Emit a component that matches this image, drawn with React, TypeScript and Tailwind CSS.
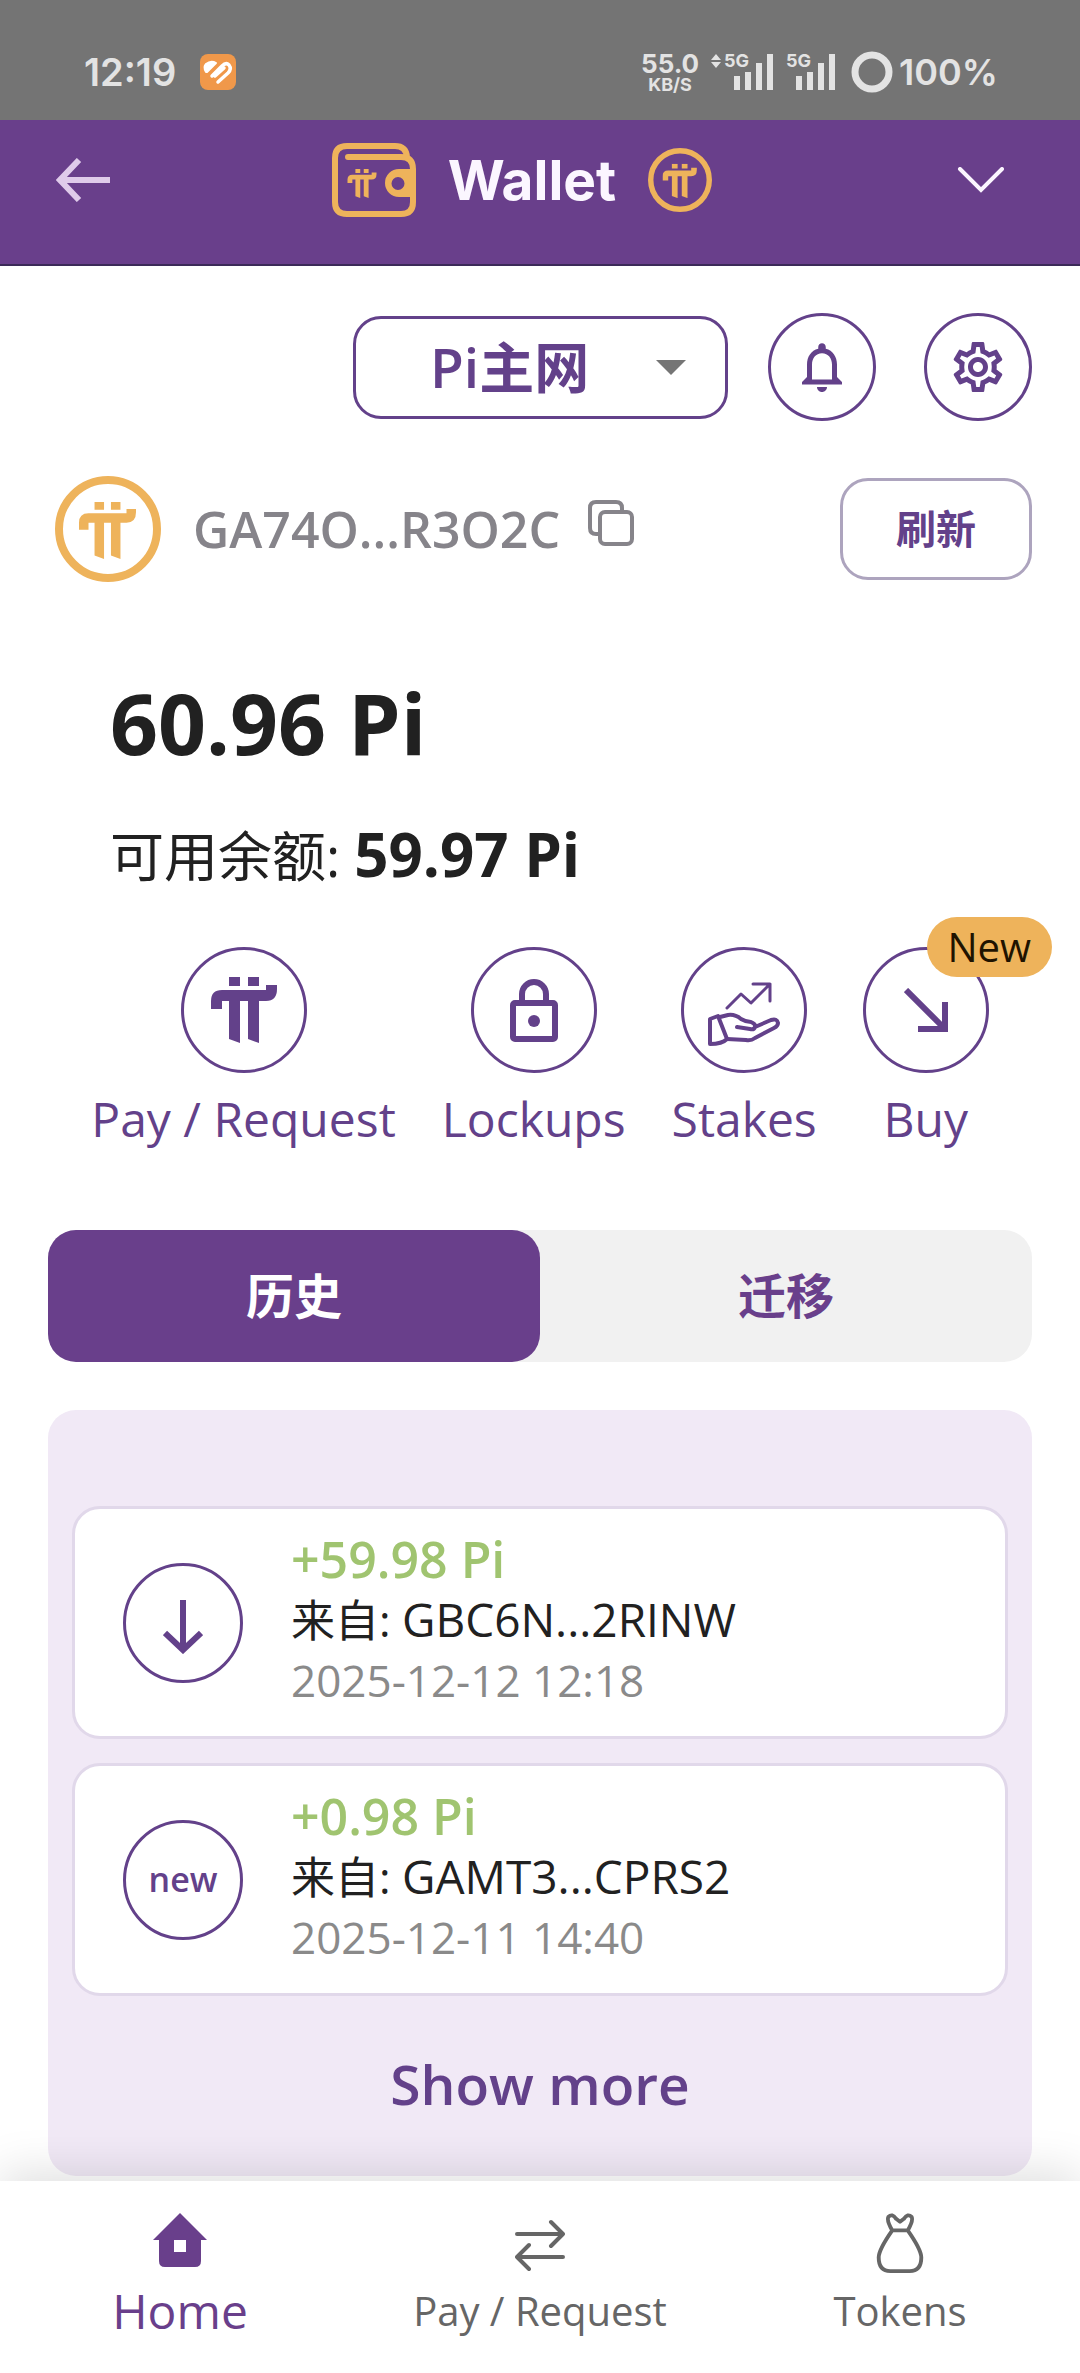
import { useState } from "react";
import { MdNotificationsNone, MdOutlineSettings } from "react-icons/md";

const networks = ["Pi主网", "Pi测试网"];

const transactions = [
    { amount: "+59.98 Pi", from: "GBC6N...2RINW", date: "2025-12-12 12:18", isNew: false },
    { amount: "+0.98 Pi", from: "GAMT3...CPRS2", date: "2025-12-11 14:40", isNew: true },
];

const PI_PATH =
    "M18 0h11v9H18zM37 0h11v9H37zM0 32V24Q0 13 11 13H55V8H66V12Q66 24 55 24H48V66L37 62V24H29V66L18 62V24H11V32Z";

const PiCoin = ({ className = "", stroke = 8 }) => (
    <svg viewBox="0 0 106 106" className={className} aria-hidden="true">
        <circle cx="53" cy="53" r={53 - stroke / 2} fill="none" stroke="currentColor" strokeWidth={stroke} />
        <svg x="24" y="26" width="57" height="57" viewBox="0 0 66 66" fill="currentColor">
            <path d={PI_PATH} />
        </svg>
    </svg>
);

const WalletLogo = () => (
    <svg viewBox="0 0 84 74" className="h-[74px] w-[84px] text-[#eeb35b]" fill="none" stroke="currentColor" aria-hidden="true">
        <path d="M75 14Q74 3 63 3H15Q3 3 3 15V59Q3 71 15 71H69Q81 71 81 59V26Q81 14 69 14H16" strokeWidth="6" strokeLinecap="round" />
        <path d="M81 26H67a14 14 0 0 0 0 28H81ZM66 34a6 6 0 1 1 0 13a6 6 0 1 1 0 -13Z" fill="currentColor" fillRule="evenodd" stroke="none" />
        <svg x="15" y="26" width="30" height="29" viewBox="0 0 66 66" fill="currentColor" stroke="none">
            <path d={PI_PATH} />
        </svg>
    </svg>
);

const Signal = ({ active = false }) => (
    <div className="relative h-9 w-[62px]">
        {active && (
            <svg viewBox="0 0 10 14" className="absolute left-0 top-0 h-3.5 w-2.5" fill="currentColor" aria-hidden="true">
                <path d="M5 0L10 6H0ZM5 14L0 8H10Z" />
            </svg>
        )}
        <span className="absolute left-[13px] -top-0.5 text-lg leading-none font-bold">5G</span>
        <svg viewBox="0 0 62 36" className="h-full w-full" fill="currentColor" aria-hidden="true">
            <path d="M23 22h6v14h-6zM34 18h6v18h-6zM45 9h6v27h-6zM56 0h6v36h-6z" />
        </svg>
    </div>
);

const StatusBar = () => (
    <div className="flex h-[120px] items-center justify-between bg-[#747474] pr-[82px] pl-[84px] pt-6 font-['Inter','Liberation_Sans',sans-serif] font-semibold text-[#e3e3e3]">
        <div className="flex items-center gap-6">
            <span className="text-[38px] leading-none">12:19</span>
            <svg viewBox="0 0 36 36" className="size-9" aria-hidden="true">
                <rect width="36" height="36" rx="8" fill="#f0984a" />
                <path d="M6 18Q3 13 6 10Q11 6 16 9L7 18Z" fill="#fff" stroke="#fff" strokeWidth="2" strokeLinejoin="round" />
                <path d="M12 22L22 12Q26 8 29 11Q32 15 28 19L18 28M15 22L24 14" fill="none" stroke="#fff" strokeWidth="3.5" strokeLinecap="round" strokeLinejoin="round" />
            </svg>
        </div>
        <div className="flex items-center">
            <div className="flex flex-col items-center font-bold">
                <span className="text-[26px] leading-[26px]">55.0</span>
                <span className="text-lg leading-4">KB/S</span>
            </div>
            <div className="ml-3 flex">
                <Signal active />
                <Signal />
            </div>
            <svg viewBox="0 0 42 42" className="ml-4 size-[42px]" aria-hidden="true">
                <circle cx="21" cy="21" r="17" fill="none" stroke="currentColor" strokeWidth="7" />
            </svg>
            <span className="ml-1.5 text-4xl leading-none">100%</span>
        </div>
    </div>
);

const Header = () => (
    <header className="flex h-[146px] items-center justify-between border-b-2 border-[#3b2a58] bg-[#693f8b] pr-[52px] pl-14 pb-6">
        <button aria-label="Back" className="text-[#dfcbea]">
            <svg viewBox="0 0 54 44" className="h-11 w-[54px]" fill="none" stroke="currentColor" strokeWidth="6" aria-hidden="true">
                <path d="M54 22H4M23 2L4 22L23 42" />
            </svg>
        </button>
        <div className="flex items-center gap-8">
            <WalletLogo />
            <h1 className="font-['Inter','Liberation_Sans',sans-serif] text-[55px] leading-none font-bold text-[#fbf6ff]">Wallet</h1>
            <PiCoin className="size-16 text-[#eeb35b]" stroke={9} />
        </div>
        <button aria-label="Expand" className="px-5 text-[#fbf6ff]">
            <svg viewBox="0 0 54 26" className="h-[26px] w-[54px]" fill="none" stroke="currentColor" strokeWidth="4" strokeLinecap="round" aria-hidden="true">
                <path d="M6 2L27 23L48 2" />
            </svg>
        </button>
    </header>
);

const NetworkBar = () => (
    <div className="flex items-center justify-end">
        <div className="relative mr-10">
            <select
                aria-label="Network"
                className="h-[103px] w-[375px] appearance-none rounded-[28px] border-3 border-[#63418a] bg-white pl-[74px] text-[55px] font-semibold text-[#63418a]"
            >
                {networks.map((n) => (
                    <option key={n}>{n}</option>
                ))}
            </select>
            <svg viewBox="0 0 30 15" className="pointer-events-none absolute right-[42px] top-11 h-[15px] w-[30px]" fill="#757575" aria-hidden="true">
                <path d="M0 0H30L15 15Z" />
            </svg>
        </div>
        <button aria-label="Notifications" className="mr-12 flex size-[108px] items-center justify-center rounded-full border-3 border-[#63418a] text-[#63418a]">
            <MdNotificationsNone className="size-[60px]" />
        </button>
        <button aria-label="Settings" className="flex size-[108px] items-center justify-center rounded-full border-3 border-[#63418a] text-[#63418a]">
            <MdOutlineSettings className="size-[60px]" />
        </button>
    </div>
);

const AccountRow = () => (
    <div className="mt-[55px] flex items-center pl-[7px]">
        <PiCoin className="size-[106px] text-[#eeb35b]" />
        <span className="ml-8 text-[50px] leading-none font-semibold text-[#86848a]">GA74O...R3O2C</span>
        <button aria-label="Copy address" className="mb-3 ml-7 text-[#86848a]">
            <svg viewBox="0 0 46 46" className="size-[46px]" fill="none" stroke="currentColor" strokeWidth="4" aria-hidden="true">
                <rect x="12" y="12" width="32" height="32" rx="5" />
                <path d="M12 34H8Q2 34 2 28V8Q2 2 8 2H28Q34 2 34 8V12" />
            </svg>
        </button>
        <button className="ml-auto h-[102px] w-48 rounded-[28px] border-3 border-[#ada4be] text-[40px] font-bold text-[#63418a]">
            刷新
        </button>
    </div>
);

const Balance = () => (
    <div className="mt-24 pl-[62px] text-[#212121]">
        <p className="text-[84px] leading-[90px] font-bold">60.96 Pi</p>
        <p className="mt-[46px] text-[54px] leading-[80px]">
            可用余额: <span className="text-[60px] font-bold">59.97 Pi</span>
        </p>
    </div>
);

const actions = [
    {
        label: "Pay / Request",
        icon: (
            <svg viewBox="0 0 66 66" className="size-[66px]" fill="currentColor" aria-hidden="true">
                <path d={PI_PATH} />
            </svg>
        ),
    },
    {
        label: "Lockups",
        icon: (
            <svg viewBox="0 0 48 63" className="h-[63px] w-12" fill="none" stroke="currentColor" strokeWidth="6" aria-hidden="true">
                <rect x="3" y="24" width="42" height="36" rx="2" />
                <path d="M12 24V15a12 12 0 0 1 24 0V24" />
                <circle cx="24" cy="42" r="6" fill="currentColor" stroke="none" />
            </svg>
        ),
    },
    {
        label: "Stakes",
        icon: (
            <svg viewBox="0 0 72 72" className="size-[72px]" fill="none" stroke="currentColor" strokeWidth="4" strokeLinecap="round" strokeLinejoin="round" aria-hidden="true">
                <path d="M19 34L33 20L43 29L62 10M45 10H62V27" strokeWidth="3" />
                <path d="M2 45L10 42L19 65Q14 70 2 70Z" />
                <path d="M12 43L20 41Q27 40 33 45Q38 48 43 48Q48 50 47 53Q46 56 42 55L29 53M47 53L63 46Q69 44 70 49Q70 52 66 54L47 64Q43 67 38 66L19 65" />
            </svg>
        ),
    },
    {
        label: "Buy",
        icon: (
            <svg viewBox="0 0 44 44" className="size-11" fill="none" stroke="currentColor" strokeWidth="6" aria-hidden="true">
                <path d="M2 2L40 40M41 14V41H14" />
            </svg>
        ),
        badge: "New",
    },
];

const Actions = () => (
    <div className="mt-[51px] flex justify-center gap-[46px] text-[#63418a]">
        {actions.map((a) => (
            <button key={a.label} className="flex flex-col items-center gap-3.5">
                <span className="relative flex size-[126px] items-center justify-center rounded-full border-3 border-[#63418a]">
                    {a.icon}
                    {a.badge && (
                        <span className="absolute -top-[33px] left-[61px] flex h-[60px] w-[125px] items-center justify-center rounded-full bg-[#eeb35b] text-[40px] text-[#1f1300]">
                            {a.badge}
                        </span>
                    )}
                </span>
                <span className="text-5xl leading-[64px]">{a.label}</span>
            </button>
        ))}
    </div>
);

const Tabs = () => {
    const [active, setActive] = useState("历史");

    return (
        <div role="tablist" className="mt-[79px] flex rounded-[28px] bg-[#f1f1f1]">
            {["历史", "迁移"].map((tab) => (
                <button
                    key={tab}
                    role="tab"
                    aria-selected={active === tab}
                    onClick={() => setActive(tab)}
                    className={`h-[132px] flex-1 rounded-[28px] text-5xl font-bold ${active === tab ? "bg-[#693f8b] text-white" : "text-[#693f8b]"}`}
                >
                    {tab}
                </button>
            ))}
        </div>
    );
};

const History = () => (
    <section className="mt-12 rounded-[28px] bg-[#f1e9f6] px-6 pt-24 pb-[50px]">
        <ul className="flex flex-col gap-6">
            {transactions.map((t) => (
                <li key={t.date} className="flex items-center gap-12 rounded-[28px] border-3 border-[#e1d8ea] bg-white px-12 py-5">
                    <span className="flex size-[120px] items-center justify-center rounded-full border-3 border-[#63418a] text-[34px] font-semibold text-[#63418a]">
                        {t.isNew ? (
                            "new"
                        ) : (
                            <svg viewBox="0 0 40 54" className="mt-2 h-[54px] w-10" fill="none" stroke="currentColor" strokeWidth="6" aria-hidden="true">
                                <path d="M20 0V50M2 33L20 50L38 33" />
                            </svg>
                        )}
                    </span>
                    <div className="pb-1.5">
                        <p className="text-[50px] leading-[60px] font-semibold text-[#a0c470]">{t.amount}</p>
                        <p className="text-[44px] leading-[60px] text-[#212121]">
                            来自: <span className="text-[46px]">{t.from}</span>
                        </p>
                        <p className="text-[44px] leading-[60px] text-[#8a8a8a]">{t.date}</p>
                    </div>
                </li>
            ))}
        </ul>
        <button className="mx-auto mt-[46px] block text-[55px] leading-[84px] font-semibold text-[#63418a]">Show more</button>
    </section>
);

const BottomNav = () => (
    <nav className="sticky bottom-0 mt-1 grid grid-cols-3 bg-white py-8 text-[#666] shadow-[0_-8px_44px_rgba(0,0,0,0.13)]">
        <a href="#home" className="flex flex-col items-center text-[#693f8b]">
            <svg viewBox="0 0 54 60" className="h-[60px] w-[54px]" fill="currentColor" aria-hidden="true">
                <path d="M27 0L54 27H48V48Q48 54 42 54H12Q6 54 6 48V27H0ZM21 27V39H33V27Z" fillRule="evenodd" />
            </svg>
            <span className="mt-2 text-5xl leading-[60px]">Home</span>
        </a>
        <a href="#pay" className="flex flex-col items-center">
            <svg viewBox="0 0 50 60" className="h-[60px] w-[50px]" fill="none" stroke="currentColor" strokeWidth="4" strokeLinecap="round" strokeLinejoin="round" aria-hidden="true">
                <path d="M2 21H48M36 9L48 21L36 33M48 44H2M14 32L2 44L14 56" />
            </svg>
            <span className="mt-2 text-[40px] leading-[60px]">Pay / Request</span>
        </a>
        <a href="#tokens" className="flex flex-col items-center">
            <svg viewBox="0 0 48 62" className="h-[60px] w-12" fill="none" stroke="currentColor" strokeWidth="4" strokeLinejoin="round" aria-hidden="true">
                <path d="M16 18Q10 8 12 4Q16 0 20 6L24 9L28 6Q32 0 36 4Q38 8 32 18ZM14 18H34M16 18Q2 38 2 46Q2 60 14 60H34Q46 60 46 46Q46 38 32 18" />
            </svg>
            <span className="mt-2 text-[40px] leading-[60px]">Tokens</span>
        </a>
    </nav>
);

const App = () => {
    return (
        <div className="flex min-h-screen flex-col bg-white font-['Open_Sans','Noto_Sans_CJK_SC',sans-serif]">
            <StatusBar />
            <Header />
            <main className="flex-1 px-12 pt-[47px]">
                <NetworkBar />
                <AccountRow />
                <Balance />
                <Actions />
                <Tabs />
                <History />
            </main>
            <BottomNav />
        </div>
    );
};

export default App;
